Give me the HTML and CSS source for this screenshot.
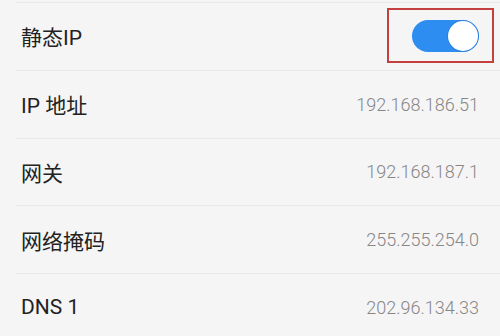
FILE: index.html
```html
<!DOCTYPE html>
<html lang="zh-CN">
<head>
<meta charset="utf-8">
<link rel="stylesheet" href="styles.css">
</head>
<body>
<div class="list">
  <div class="row">
    <span class="label">静态IP</span>
    <span class="switch">
      <span class="knob"></span>
      <span class="mark"></span>
    </span>
  </div>
  <div class="row">
    <span class="label">IP 地址</span>
    <span class="value">192.168.186.51</span>
  </div>
  <div class="row">
    <span class="label">网关</span>
    <span class="value">192.168.187.1</span>
  </div>
  <div class="row">
    <span class="label">网络掩码</span>
    <span class="value">255.255.254.0</span>
  </div>
  <div class="row">
    <span class="label">DNS 1</span>
    <span class="value">202.96.134.33</span>
  </div>
</div>
</body>
</html>
```
FILE: styles.css
```css
html, body {
  margin: 0;
  padding: 0;
  background: #f5f5f5;
  width: 500px;
  height: 336px;
  overflow: hidden;
}
.list {
  padding-top: 2px;
  font-family: Roboto, "Noto Sans CJK SC", sans-serif;
}
.row {
  box-sizing: border-box;
  height: 67.75px;
  margin-left: 16px;
  padding-left: 5px;
  padding-right: 21px;
  border-top: 1px solid #eaeaea;
  display: flex;
  align-items: center;
  justify-content: space-between;
}
.label {
  font-size: 21px;
  color: #222;
}
.value {
  font-size: 18px;
  font-weight: 300;
  color: #878787;
}
.switch {
  position: relative;
  box-sizing: border-box;
  width: 67px;
  height: 32px;
  border-radius: 16px;
  background: #2d8df0;
  display: flex;
  align-items: center;
  justify-content: flex-end;
  padding-right: 1px;
}
.knob {
  width: 30px;
  height: 30px;
  border-radius: 50%;
  background: #fff;
  box-shadow: 0 0 0 1px rgba(30, 110, 200, 0.4);
}
.mark {
  position: absolute;
  left: -25px;
  top: -12px;
  width: 107px;
  height: 55px;
  box-sizing: border-box;
  border: 2px solid #c4403f;
}
```
